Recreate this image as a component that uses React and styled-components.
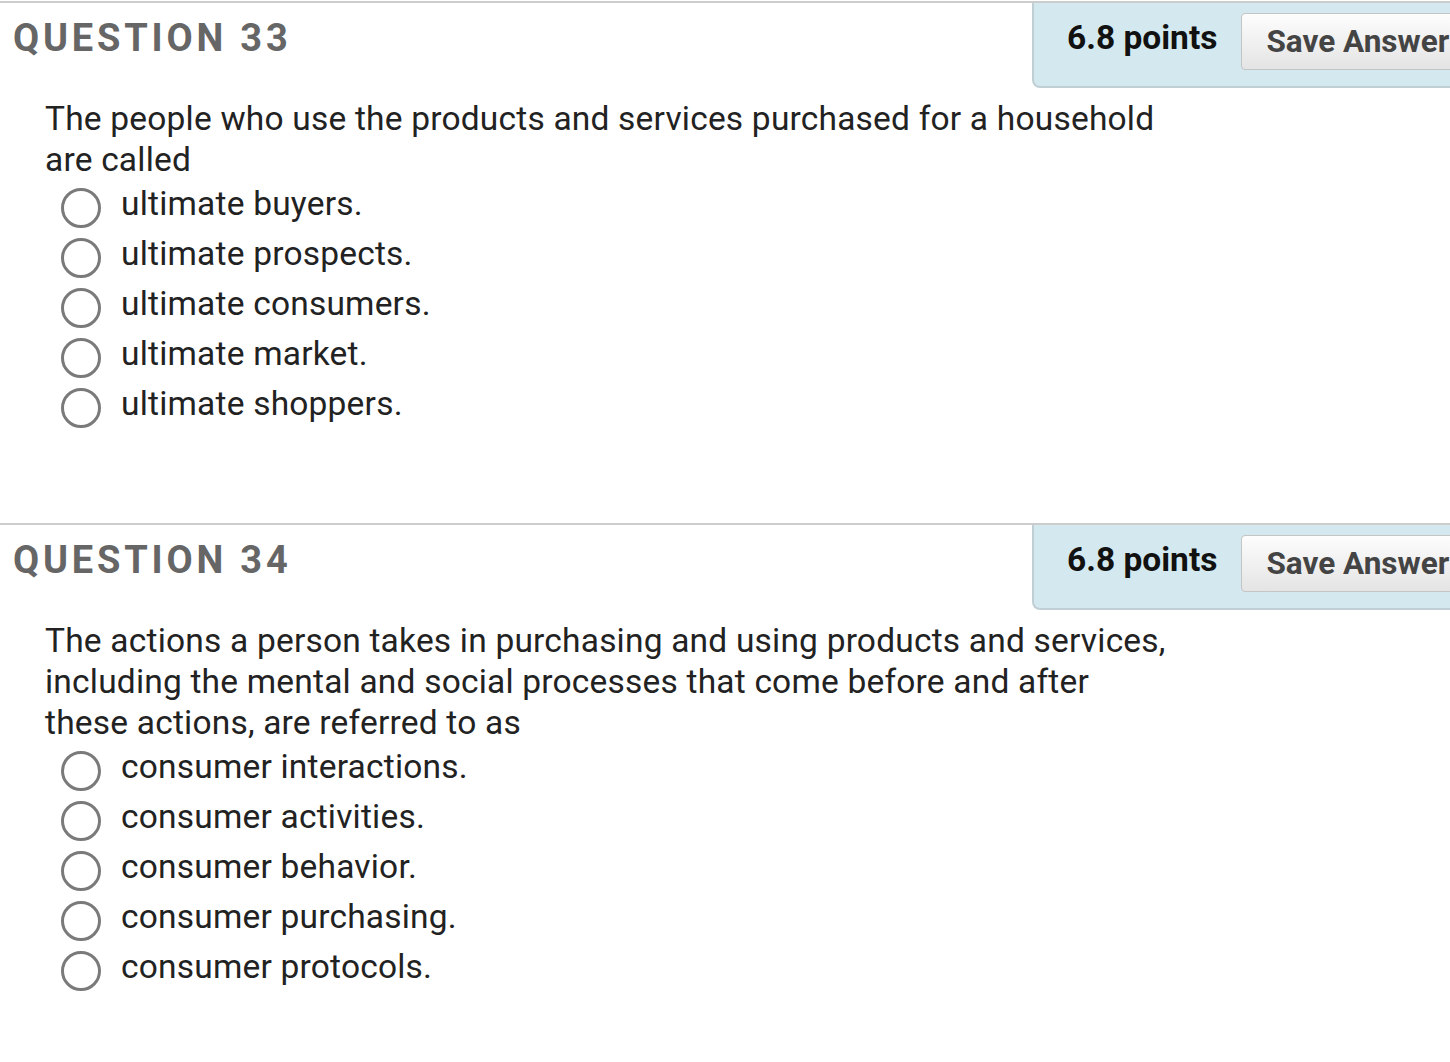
import React from 'react'
import styled, { createGlobalStyle } from 'styled-components'

const GlobalStyle = createGlobalStyle`
    html, body {
        margin: 0;
        padding: 0;
        background: #fff;
    }
    body {
        font-family: Roboto, "Liberation Sans", Arial, sans-serif;
        overflow-x: hidden;
    }
`

const Page = styled.div`
    width: 1450px;
    padding-top: 1px;
    overflow: hidden;
`

const Section = styled.div`
    border-top: 2px solid #cccccc;
    padding-bottom: ${props => props.bottom}px;
`

const Header = styled.div`
    display: grid;
    grid-template-columns: 1032px 1fr;
    height: 85px;
`

const Title = styled.h2`
    margin: 0;
    padding: 15px 0 0 13px;
    font-size: 38px;
    font-weight: 700;
    letter-spacing: 3.8px;
    color: #666666;
    line-height: 40px;
`

const PointsBox = styled.div`
    display: flex;
    align-items: flex-start;
    gap: 24px;
    padding: 9px 0 0 33px;
    background: #d4e9ef;
    border-left: 2px solid #bfcfd3;
    border-bottom: 2px solid #bfcfd3;
    border-bottom-left-radius: 8px;
    white-space: nowrap;
    overflow: hidden;
    box-sizing: border-box;
`

const Points = styled.div`
    font-size: 33.5px;
    font-weight: 700;
    color: #111111;
    line-height: 52px;
`

const SaveButton = styled.button`
    flex-shrink: 0;
    height: 57px;
    margin-top: 1px;
    padding: 0 24px;
    font-family: Roboto, "Liberation Sans", Arial, sans-serif;
    font-size: 31.5px;
    font-weight: 700;
    color: #444444;
    background: linear-gradient(#fdfdfd, #e4e4e4);
    border: 1px solid #c4c4c4;
    border-radius: 4px;
`

const Prompt = styled.p`
    margin: 10px 0 3px 45px;
    max-width: 1128px;
    font-size: 33.5px;
    letter-spacing: 0.2px;
    line-height: 41px;
    color: #222222;
`

const Options = styled.ul`
    list-style: none;
    margin: 0;
    padding: 0 0 0 61px;
`

const Option = styled.li`
    display: flex;
    align-items: center;
    height: 50px;
    font-size: 33.5px;
    letter-spacing: 0.2px;
    color: #222222;
`

const Radio = styled.span`
    width: 40px;
    height: 40px;
    box-sizing: border-box;
    border: 3px solid #7a7a7a;
    border-radius: 50%;
    margin-right: 20px;
    flex-shrink: 0;
`

const Label = styled.span`
    padding-bottom: 10px;
`

const questions = [
    {
        number: 33,
        prompt: 'The people who use the products and services purchased for a household are called',
        options: ['ultimate buyers.', 'ultimate prospects.', 'ultimate consumers.', 'ultimate market.', 'ultimate shoppers.'],
        bottom: 90,
    },
    {
        number: 34,
        prompt: 'The actions a person takes in purchasing and using products and services, including the mental and social processes that come before and after these actions, are referred to as',
        options: ['consumer interactions.', 'consumer activities.', 'consumer behavior.', 'consumer purchasing.', 'consumer protocols.'],
        bottom: 70,
    },
]

function Question({ q }) {
    return (
        <Section bottom={q.bottom}>
            <Header>
                <Title>QUESTION {q.number}</Title>
                <PointsBox>
                    <Points>6.8 points</Points>
                    <SaveButton>Save Answer</SaveButton>
                </PointsBox>
            </Header>
            <Prompt>{q.prompt}</Prompt>
            <Options>
                {q.options.map(opt => (
                    <Option key={opt}>
                        <Radio />
                        <Label>{opt}</Label>
                    </Option>
                ))}
            </Options>
        </Section>
    )
}

export default function App() {
    return (
        <Page>
            <GlobalStyle />
            {questions.map(q => <Question key={q.number} q={q} />)}
        </Page>
    )
}
